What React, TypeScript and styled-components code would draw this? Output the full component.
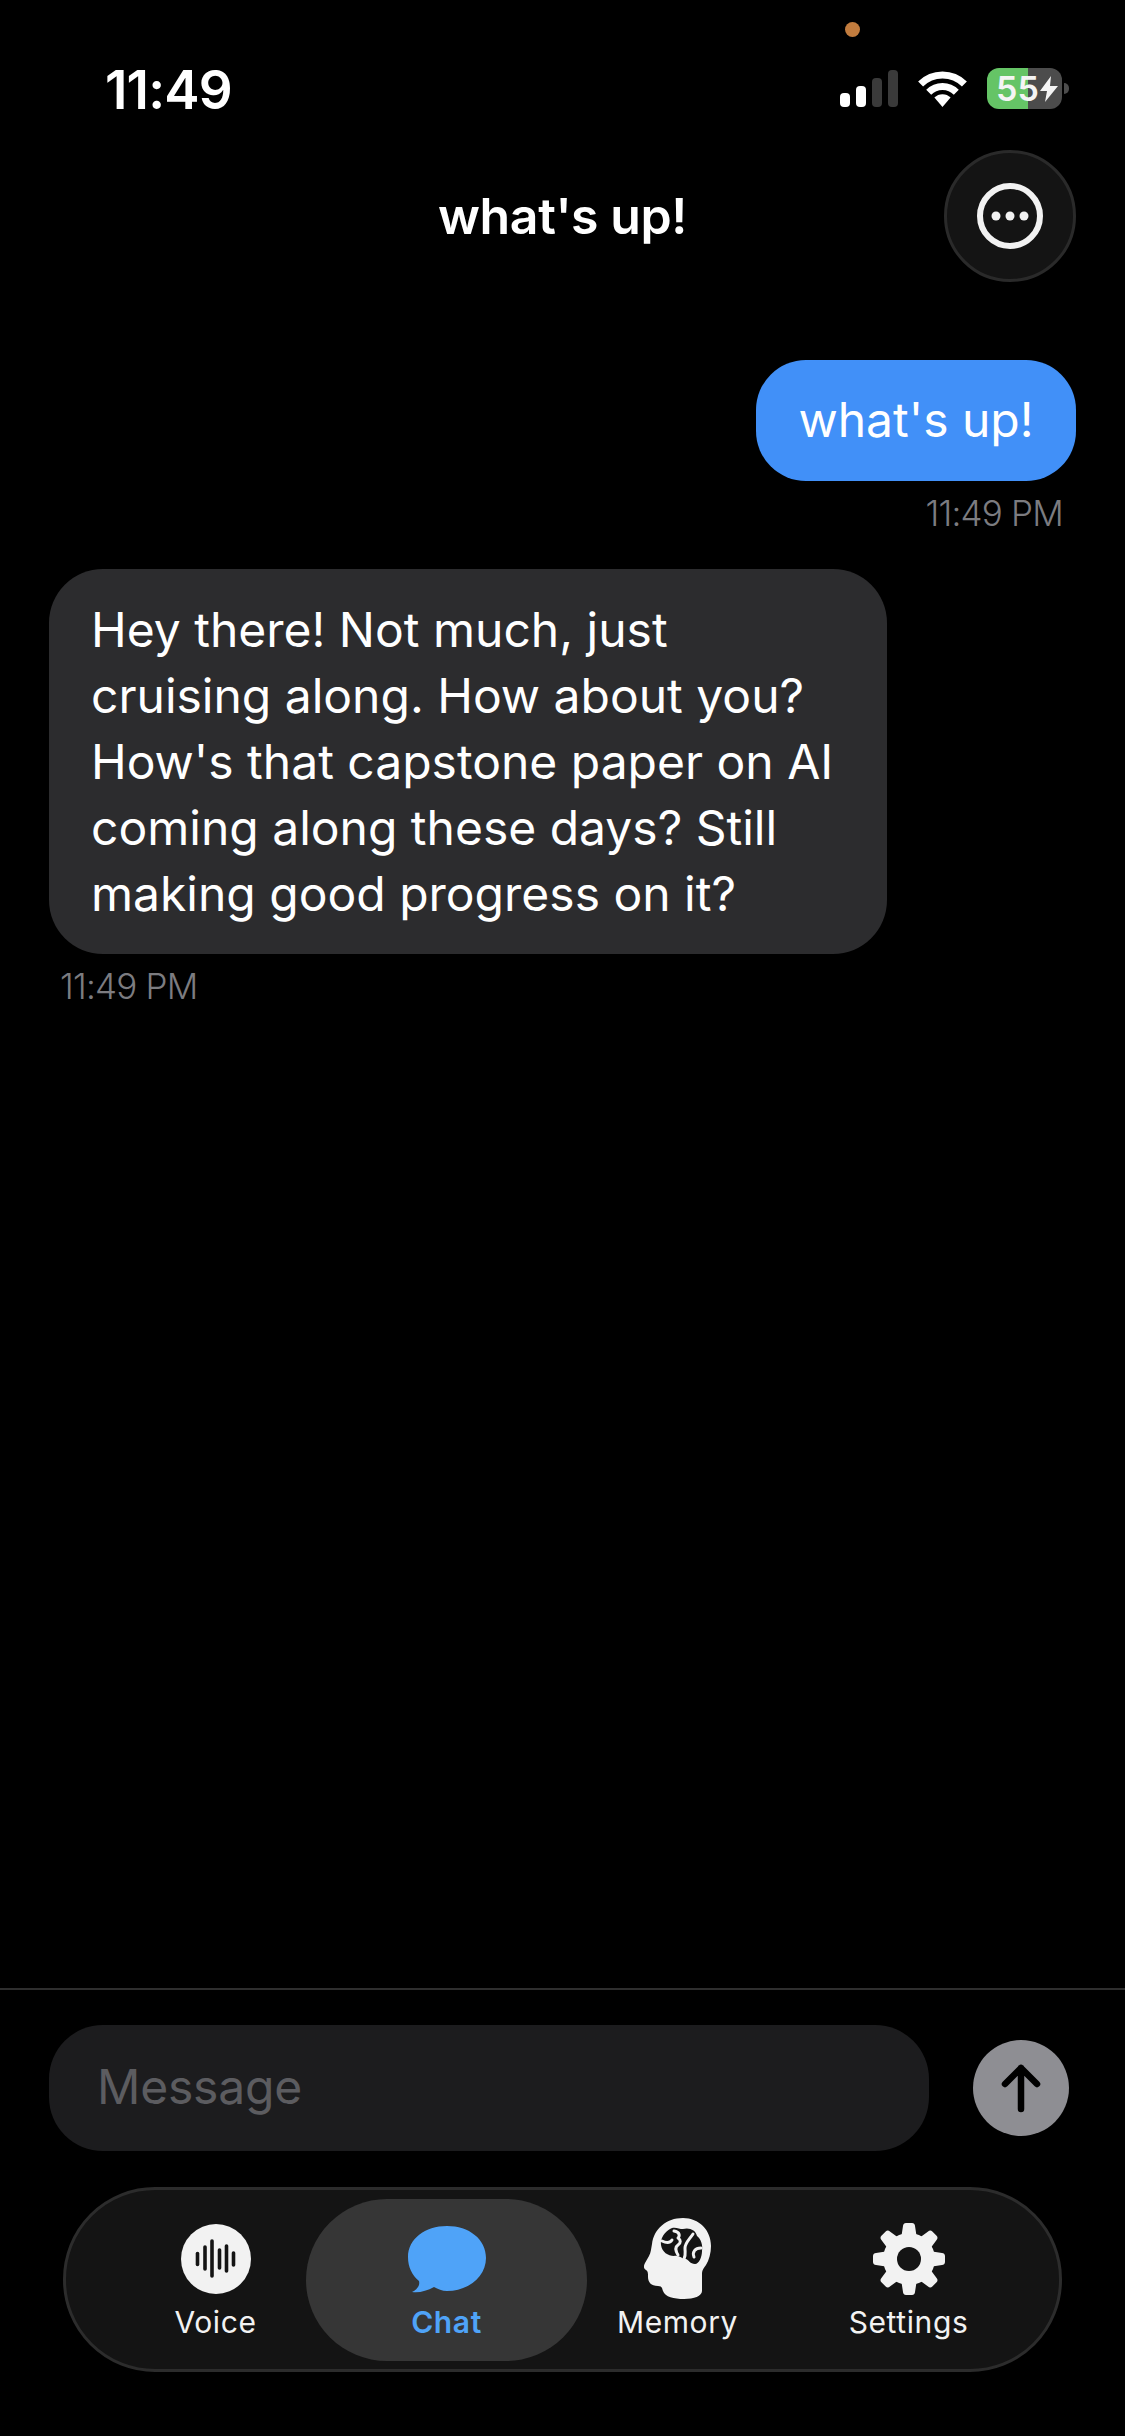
import React from 'react';
import styled, { createGlobalStyle } from 'styled-components';

const GlobalStyle = createGlobalStyle`
  html, body {
    margin: 0;
    padding: 0;
    background: #000;
  }
  * {
    box-sizing: border-box;
  }
`;

const Page = styled.div`
  position: relative;
  width: 1125px;
  height: 2436px;
  display: flex;
  flex-direction: column;
  overflow: hidden;
  background: #000;
  color: #fff;
  font-family: Inter, "Liberation Sans", sans-serif;
`;

const RecordingDot = styled.span`
  position: absolute;
  left: 845px;
  top: 22px;
  width: 15px;
  height: 15px;
  border-radius: 50%;
  background: #c27c3e;
`;

const StatusBar = styled.div`
  height: 150px;
  padding: 68px 56px 0 105px;
  display: flex;
  justify-content: space-between;
`;

const Clock = styled.div`
  padding-top: 2px;
  font-size: 53px;
  font-weight: 600;
  line-height: 41px;
  letter-spacing: -0.8px;
`;

const StatusIcons = styled.div`
  display: flex;
  align-items: center;
  height: 41px;
`;

const SignalBars = styled.div`
  display: flex;
  align-items: flex-end;
  gap: 6px;
  height: 37px;
  margin-right: 19px;
`;

const SignalBar = styled.span<{ $h: number; $on?: boolean }>`
  width: 10px;
  height: ${p => p.$h}px;
  border-radius: 4px;
  background: ${p => (p.$on ? '#fff' : '#3a3a3a')};
`;

const Battery = styled.div`
  position: relative;
  width: 75px;
  height: 41px;
  margin-left: 19px;
  border-radius: 12px;
  overflow: hidden;
  display: flex;
  align-items: center;
  background: linear-gradient(to right, #65c466 0, #65c466 41px, #4c4c4c 41px);
`;

const BatteryLevel = styled.span`
  margin-left: 9px;
  font-size: 34px;
  font-weight: 600;
  line-height: 41px;
  color: #f4f4f4;
`;

const BatteryCap = styled.span`
  width: 5px;
  height: 11px;
  margin-left: 2px;
  border-radius: 0 5px 5px 0;
  background: #4c4c4c;
`;

const Header = styled.div`
  height: 132px;
  padding: 0 49px;
  display: grid;
  grid-template-columns: 1fr auto 1fr;
  align-items: center;
`;

const Title = styled.div`
  grid-column: 2;
  font-size: 50px;
  font-weight: 600;
  line-height: 60px;
  letter-spacing: -0.4px;
`;

const MoreButton = styled.button`
  grid-column: 3;
  justify-self: end;
  width: 132px;
  height: 132px;
  padding: 0;
  display: flex;
  align-items: center;
  justify-content: center;
  border: 3px solid #2a2a2a;
  border-radius: 50%;
  background: #141414;
`;

const Messages = styled.div`
  flex: 1;
  padding: 78px 49px 0;
  display: flex;
  flex-direction: column;
`;

const Bubble = styled.div<{ $mine?: boolean }>`
  font-size: 48px;
  line-height: 66px;
  color: #fff;
  ${p =>
    p.$mine
      ? `
    align-self: flex-end;
    width: 320px;
    height: 121px;
    padding: 27px 0 0;
    text-align: center;
    border-radius: 50px;
    background: #4190f8;
  `
      : `
    align-self: flex-start;
    width: 838px;
    padding: 28px 42px 27px 42px;
    border-radius: 54px;
    background: #2c2c2e;
  `}
`;

const Stamp = styled.div<{ $mine?: boolean }>`
  margin-top: 12px;
  margin-bottom: 36px;
  padding: 0 ${p => (p.$mine ? '13px' : '0')} 0 ${p => (p.$mine ? '0' : '11px')};
  align-self: ${p => (p.$mine ? 'flex-end' : 'flex-start')};
  font-size: 35px;
  font-weight: 300;
  line-height: 40px;
  letter-spacing: -0.8px;
  color: #7c7c80;
`;

const Composer = styled.div`
  border-top: 2px solid #2e2e2e;
  padding: 35px 56px 0 49px;
  display: flex;
  align-items: center;
  justify-content: space-between;
`;

const MessageField = styled.div`
  width: 880px;
  height: 126px;
  padding: 0 0 4px 48px;
  display: flex;
  align-items: center;
  border-radius: 54px;
  background: #1c1c1e;
  font-size: 48px;
  letter-spacing: -0.2px;
  color: #5c5c60;
`;

const SendButton = styled.button`
  width: 96px;
  height: 96px;
  padding: 0;
  display: flex;
  align-items: center;
  justify-content: center;
  border: none;
  border-radius: 50%;
  background: #8e8e93;
`;

const TabBar = styled.nav`
  width: 999px;
  height: 185px;
  margin: 36px 0 64px 63px;
  padding: 9px 37px 8px 34px;
  display: grid;
  grid-template-columns: repeat(4, 231px);
  border: 3px solid #2c2c2c;
  border-radius: 92px;
  background: #141414;
`;

const Tab = styled.div<{ $active?: boolean }>`
  height: 162px;
  margin: ${p => (p.$active ? '0 -25px' : '0')};
  padding-top: 19px;
  display: flex;
  flex-direction: column;
  align-items: center;
  border-radius: 81px;
  background: ${p => (p.$active ? '#363636' : 'transparent')};
  color: ${p => (p.$active ? '#4fa3f8' : '#f2f2f2')};
`;

const TabIcon = styled.div`
  height: 81px;
  display: flex;
  align-items: center;
  justify-content: center;
`;

const TabLabel = styled.div<{ $active?: boolean }>`
  margin-top: 3px;
  font-size: 30px;
  font-weight: ${p => (p.$active ? 600 : 400)};
  line-height: 40px;
  letter-spacing: 0.6px;
`;

const WifiIcon = () => (
  <svg width="51" height="37" viewBox="0 0 51 37">
    <g fill="none" stroke="#fff" strokeWidth="7">
      <path d="M3.6 14.1A31 31 0 0 1 47.4 14.1" />
      <path d="M11.7 22.2A19.5 19.5 0 0 1 39.3 22.2" />
    </g>
    <path d="M25.5 37 L17.4 27.6A11.5 11.5 0 0 1 33.6 27.6Z" fill="#fff" />
  </svg>
);

const BoltIcon = () => (
  <svg width="18" height="26" viewBox="0 0 18 26" style={{ marginLeft: 1 }}>
    <path d="M11 0 L0 15 H7 L5 26 L18 10 H10Z" fill="#f4f4f4" />
  </svg>
);

const MoreIcon = () => (
  <svg width="66" height="66" viewBox="0 0 66 66">
    <circle cx="33" cy="33" r="30" fill="none" stroke="#f2f2f2" strokeWidth="6" />
    <circle cx="19" cy="33" r="4.5" fill="#f2f2f2" />
    <circle cx="33" cy="33" r="4.5" fill="#f2f2f2" />
    <circle cx="47" cy="33" r="4.5" fill="#f2f2f2" />
  </svg>
);

const ArrowIcon = () => (
  <svg width="40" height="50" viewBox="0 0 40 50">
    <path
      d="M20 46V5M4 21 20 5 36 21"
      fill="none"
      stroke="#000"
      strokeWidth="6.5"
      strokeLinecap="round"
      strokeLinejoin="round"
    />
  </svg>
);

const VoiceIcon = () => (
  <svg width="70" height="70" viewBox="0 0 70 70">
    <circle cx="35" cy="35" r="35" fill="#f2f2f2" />
    <g stroke="#141414" strokeWidth="3.6" strokeLinecap="round">
      <path d="M16.500 29.500V40.500" />
      <path d="M24 23V45" />
      <path d="M31 17V52" />
      <path d="M38.500 26V44" />
      <path d="M45.500 22V47" />
      <path d="M52.500 29V41" />
    </g>
  </svg>
);

const ChatIcon = () => (
  <svg width="80" height="68" viewBox="0 0 80 68">
    <path
      d="M40 1C18 1 1 14 1 32 1 42 5 50 12 56 13 60 11 64 5 67 12 68 20 66 27 62 31 64 35 66 40 66 62 66 79 51 79 33 79 14 62 1 40 1Z"
      fill="#4fa3f8"
    />
  </svg>
);

const MemoryIcon = () => (
  <svg width="68" height="81" viewBox="10 8 68 81">
    <path
      d="M49 8C32 8 20 19 18 34 17 39 17 42 15 46L11 53C9 57 10 59 12 60 14 61 14 63 14 67 14 72 17 76 24 76 28 76 28 78 29 81 31 87 40 89 50 89 60 89 68 86 68 81V63C68 60 70 58 72 55 75 50 77 43 77 36 77 20 65 8 49 8Z"
      fill="#f2f2f2"
    />
    <path
      d="M36 19C40 16 45 19 49 19 55 17 62 20 63 26 67 29 69 35 68 41 68 47 65 54 61 54 56 54 55 50 52 49 48 49 45 45 40 46 34 46 28 42 27 35 26 28 31 22 36 19Z"
      fill="#141414"
    />
    <g fill="none" stroke="#f2f2f2" strokeWidth="3" strokeLinecap="round" strokeLinejoin="round">
      <path d="M28 31C32 33 36 33 38 30" />
      <path d="M40 21C46 22 46 26 44 28 47 30 47 33 44 35 41 37 41 40 44 45" />
      <path d="M59 24C55 30 51 33 51 38 51 43 52 45 50 49" />
      <path d="M67 38C61 38 58 42 60 47" />
    </g>
  </svg>
);

const SettingsIcon = () => (
  <svg width="72" height="72" viewBox="0 0 72 72">
    <circle cx="36" cy="36" r="26" fill="#f2f2f2" />
    {[0, 45, 90, 135, 180, 225, 270, 315].map(a => (
      <path
        key={a}
        d="M28 16 30 3C30 1.500 31 0 33 0H39C41 0 42 1.500 42 3L44 16Z"
        fill="#f2f2f2"
        transform={`rotate(${a} 36 36)`}
      />
    ))}
    <circle cx="36" cy="36" r="12" fill="#141414" />
  </svg>
);

const App: React.FC = () => {
  return (
    <Page>
      <GlobalStyle />
      <RecordingDot />
      <StatusBar>
        <Clock>11:49</Clock>
        <StatusIcons>
          <SignalBars>
            <SignalBar $h={14} $on />
            <SignalBar $h={21} $on />
            <SignalBar $h={29} />
            <SignalBar $h={37} />
          </SignalBars>
          <WifiIcon />
          <Battery>
            <BatteryLevel>55</BatteryLevel>
            <BoltIcon />
          </Battery>
          <BatteryCap />
        </StatusIcons>
      </StatusBar>
      <Header>
        <Title>what's up!</Title>
        <MoreButton>
          <MoreIcon />
        </MoreButton>
      </Header>
      <Messages>
        <Bubble $mine>what's up!</Bubble>
        <Stamp $mine>11:49 PM</Stamp>
        <Bubble>
          Hey there! Not much, just cruising along. How about you? How's that capstone paper on AI
          coming along these days? Still making good progress on it?
        </Bubble>
        <Stamp>11:49 PM</Stamp>
      </Messages>
      <Composer>
        <MessageField>Message</MessageField>
        <SendButton>
          <ArrowIcon />
        </SendButton>
      </Composer>
      <TabBar>
        <Tab>
          <TabIcon>
            <VoiceIcon />
          </TabIcon>
          <TabLabel>Voice</TabLabel>
        </Tab>
        <Tab $active>
          <TabIcon>
            <ChatIcon />
          </TabIcon>
          <TabLabel $active>Chat</TabLabel>
        </Tab>
        <Tab>
          <TabIcon>
            <MemoryIcon />
          </TabIcon>
          <TabLabel>Memory</TabLabel>
        </Tab>
        <Tab>
          <TabIcon>
            <SettingsIcon />
          </TabIcon>
          <TabLabel>Settings</TabLabel>
        </Tab>
      </TabBar>
    </Page>
  );
};

export default App;
